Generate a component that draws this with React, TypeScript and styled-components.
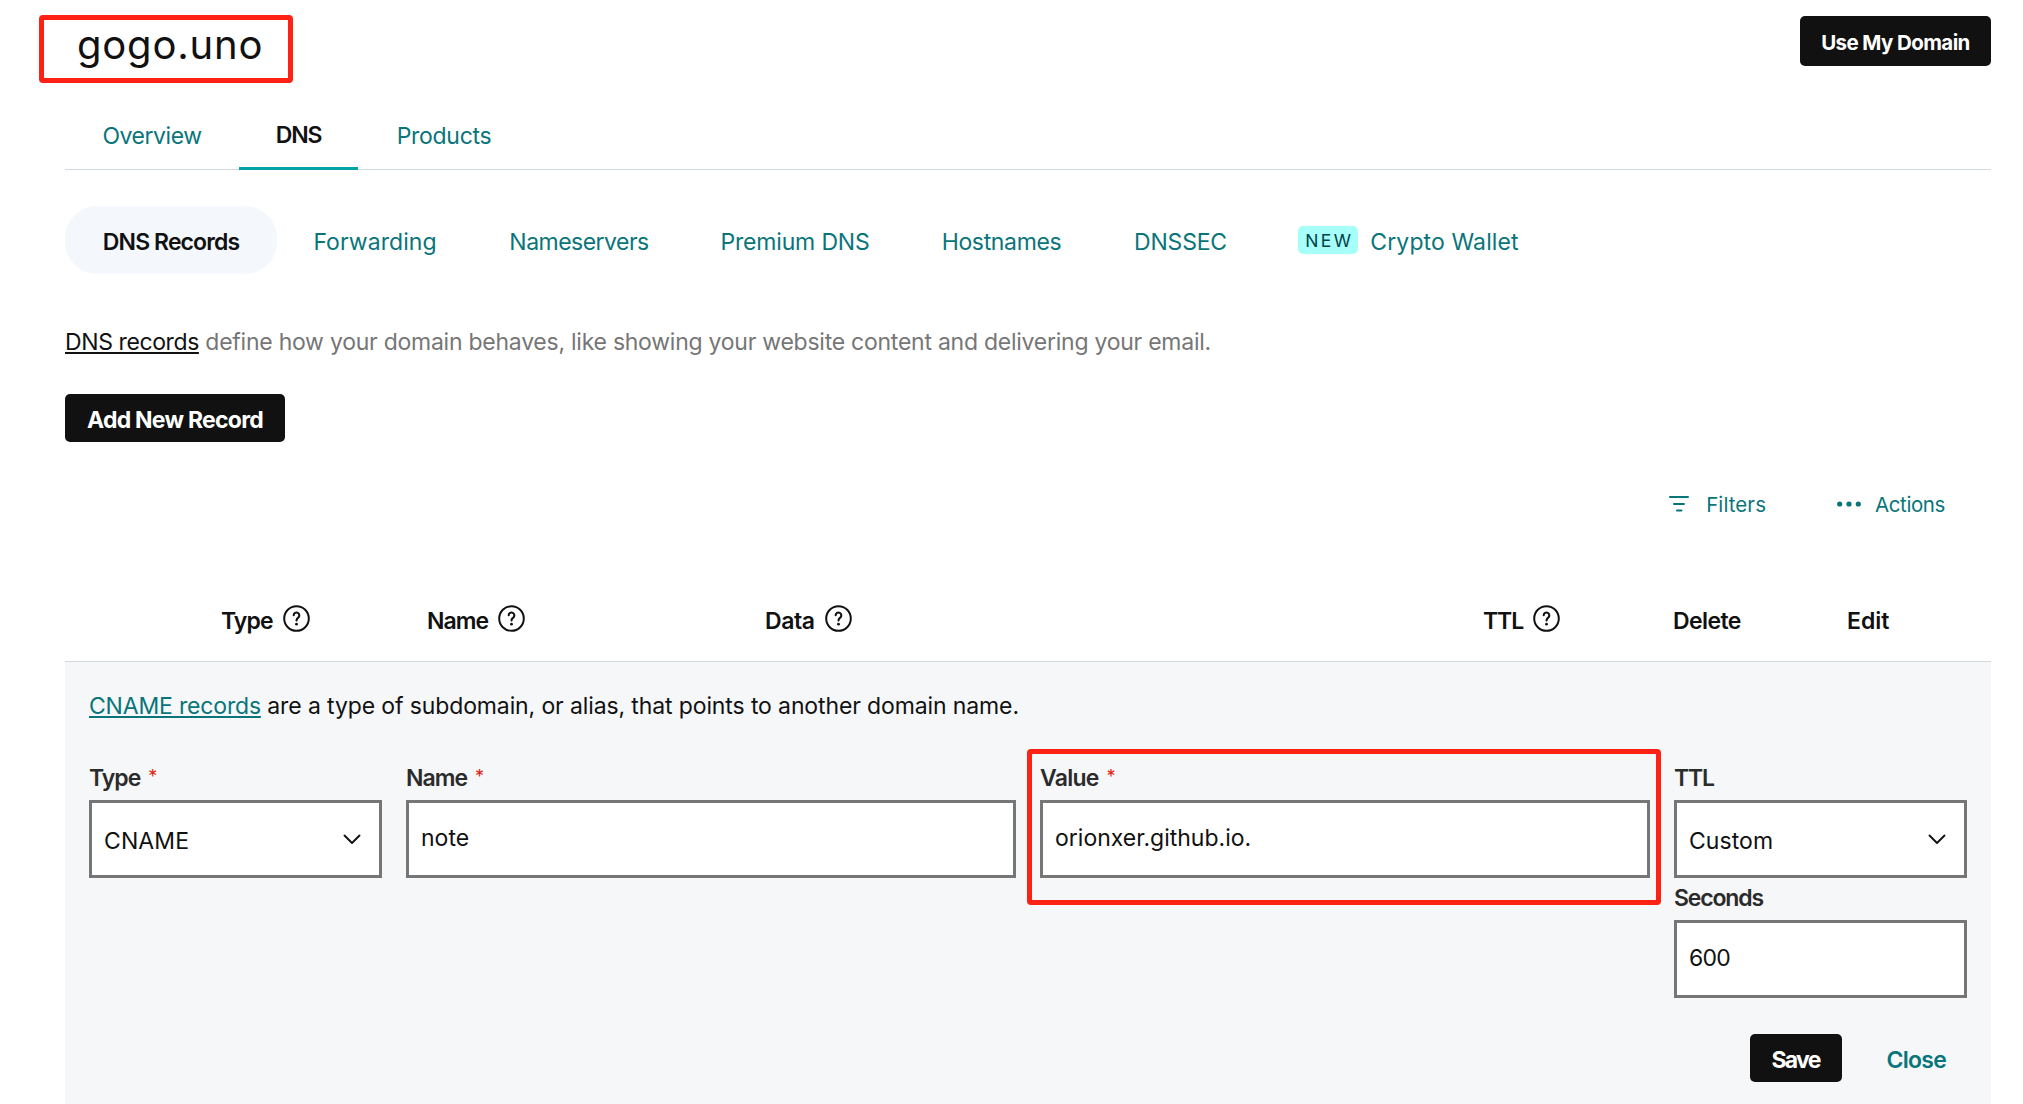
import React from 'react';
import styled, { createGlobalStyle, css } from 'styled-components';

const teal = '#09757a';
const ink = '#111111';

const GlobalStyle = createGlobalStyle`
  *, *::before, *::after { box-sizing: border-box; }
  body {
    margin: 0;
    background: #ffffff;
    color: ${ink};
    font-family: Inter, 'Liberation Sans', sans-serif;
    font-size: 23px;
  }
`;

const Page = styled.main`
  width: 2023px;
  height: 1104px;
  padding: 0 32px 0 65px;
  overflow: hidden;
  display: flex;
  flex-direction: column;
`;

const Text = styled.span<{ $track?: number }>`
  letter-spacing: ${({ $track = 0 }) => $track}px;
  white-space: nowrap;
`;

const Header = styled.header`
  height: 103px;
  padding-top: 16px;
  display: flex;
  justify-content: space-between;
  align-items: flex-start;
  flex: none;
`;

const TitleWrap = styled.div`
  position: relative;
  width: 198px;
  padding: 5px 0 0 12px;
`;

const Title = styled.h1`
  margin: 0;
  font-size: 40px;
  font-weight: 400;
  line-height: 48px;
  letter-spacing: 0.8px;
`;

const Highlight = styled.div<{ $inset: string }>`
  position: absolute;
  inset: ${({ $inset }) => $inset};
  border: 5px solid #ff2113;
  border-radius: 4px;
  pointer-events: none;
`;

const Button = styled.button<{ $w: number; $h?: number; $size?: number }>`
  width: ${({ $w }) => $w}px;
  height: ${({ $h = 48 }) => $h}px;
  padding: 3px 0 0;
  border: 0;
  border-radius: 5px;
  background: ${ink};
  color: #ffffff;
  font-family: inherit;
  font-size: ${({ $size = 23 }) => $size}px;
  font-weight: 700;
  display: flex;
  align-items: center;
  justify-content: center;
  flex: none;
`;

const Tabs = styled.nav`
  height: 67px;
  border-bottom: 1px solid #d4dbe0;
  display: flex;
  flex: none;
`;

const Tab = styled.a<{ $w: number; $active?: boolean }>`
  width: ${({ $w }) => $w}px;
  height: 67px;
  display: flex;
  align-items: center;
  justify-content: center;
  color: ${teal};
  padding-top: 2px;
  border-bottom: 3px solid transparent;
  ${({ $active }) =>
    $active &&
    css`
      color: ${ink};
      font-weight: 600;
      padding-top: 0;
      border-bottom-color: #00a4a6;
    `}
`;

const SubNav = styled.nav`
  display: flex;
  margin-top: 36px;
  height: 68px;
  flex: none;
`;

const Pill = styled.a<{ $w: number; $active?: boolean }>`
  width: ${({ $w }) => $w}px;
  padding-top: 3px;
  display: flex;
  align-items: center;
  justify-content: center;
  border-radius: 32px;
  color: ${({ $active }) => ($active ? ink : teal)};
  background: ${({ $active }) => ($active ? '#f4f8fc' : 'transparent')};
  font-weight: ${({ $active }) => ($active ? 600 : 400)};
`;

const Badge = styled.span`
  width: 60px;
  height: 28px;
  margin: 0 12px 3px 0;
  padding-left: 2px;
  border-radius: 5px;
  background: #a6fff8;
  color: #004249;
  font-size: 17.5px;
  display: flex;
  align-items: center;
  justify-content: center;
`;

const Description = styled.p`
  margin: 50px 0 34px;
  line-height: 36px;
  color: #767676;
  flex: none;
`;

const Link = styled.a<{ $color: string; $track: number }>`
  color: ${({ $color }) => $color};
  letter-spacing: ${({ $track }) => $track}px;
  text-decoration: underline;
  text-decoration-thickness: 2px;
  text-underline-offset: 2px;
  text-decoration-skip-ink: none;
`;

const Toolbar = styled.div`
  height: 32px;
  margin-top: 46px;
  padding-right: 46px;
  display: flex;
  justify-content: flex-end;
  gap: 71px;
  color: ${teal};
  font-size: 20.5px;
  flex: none;
`;

const Action = styled.a<{ $gap: number; $drop?: number }>`
  display: flex;
  align-items: center;
  gap: ${({ $gap }) => $gap}px;
  svg { margin-bottom: 1px; }
  ${Text} { padding-top: ${({ $drop = 0 }) => $drop}px; }
`;

const TableHead = styled.div`
  height: 83px;
  margin-top: 59px;
  padding-left: 156px;
  display: grid;
  grid-template-columns: 206px 338px 718px 190px 174px 1fr;
  align-items: center;
  border-bottom: 1px solid #d4dbe0;
  font-weight: 600;
  flex: none;
`;

const HeadCell = styled.div`
  display: flex;
  align-items: center;
  gap: 10px;
  padding-top: 1px;
  svg { margin-bottom: 4px; }
`;

const Panel = styled.section`
  flex: 1;
  padding: 26px 24px 0;
  background: #f5f7f9;
`;

const Info = styled.p`
  margin: 0 0 36px;
  line-height: 36px;
`;

const Form = styled.div`
  display: grid;
  grid-template-columns: 293px 610px 610px 293px;
  column-gap: 24px;
`;

const Column = styled.div`
  position: relative;
  display: flex;
  flex-direction: column;
  gap: 2px;
`;

const Label = styled.label`
  display: flex;
  height: 40px;
  line-height: 36px;
  font-weight: 600;
  color: #2b2b2b;
`;

const Star = styled.span`
  margin-left: 8px;
  margin-top: -1px;
  color: #e01e10;
  font-size: 18px;
  font-weight: 400;
`;

const Control = styled.div<{ $select?: boolean }>`
  height: 78px;
  border: 3px solid #767676;
  background: #ffffff;
  padding: ${({ $select }) => ($select ? '3px 18px 0 12px' : '0 12px 3px')};
  display: flex;
  align-items: center;
  justify-content: space-between;
  svg { margin-bottom: 3px; }
`;

const Footer = styled.div`
  margin-top: 36px;
  padding-right: 21px;
  display: flex;
  justify-content: flex-end;
  gap: 45px;
`;

const CloseLink = styled.a`
  padding-top: 3px;
  display: flex;
  align-items: center;
  color: ${teal};
  font-weight: 600;
`;

const HelpIcon = () => (
  <svg width="27" height="27" viewBox="0 0 27 27" fill="none" stroke={ink} strokeWidth="2" strokeLinecap="round">
    <circle cx="13.5" cy="13.5" r="12.3" />
    <path d="M10.7 10.3a2.8 2.8 0 1 1 4.5 2.3c-1.1.8-1.7 1.3-1.7 2.8" strokeWidth="2.1" />
    <circle cx="13.5" cy="19.2" r="1.4" fill={ink} stroke="none" />
  </svg>
);

const FilterIcon = () => (
  <svg width="20" height="18" viewBox="0 0 20 18" stroke={teal} strokeWidth="2" strokeLinecap="round">
    <path d="M1 2h18M5 9h10M8 15.5h4.5" />
  </svg>
);

const DotsIcon = () => (
  <svg width="24" height="6" viewBox="0 0 24 6" fill={teal}>
    <circle cx="2.7" cy="3" r="2.6" />
    <circle cx="12" cy="3" r="2.6" />
    <circle cx="21.3" cy="3" r="2.6" />
  </svg>
);

const Chevron = () => (
  <svg width="18" height="11" viewBox="0 0 18 11" fill="none" stroke={ink} strokeWidth="1.9" strokeLinecap="round" strokeLinejoin="round">
    <path d="M1.5 1.5 9 9l7.5-7.5" />
  </svg>
);

const tabs = [
  { label: 'Overview', w: 174, track: -0.45 },
  { label: 'DNS', w: 119, track: -1.1, active: true },
  { label: 'Products', w: 172, track: -0.3 },
];

const pills = [
  { label: 'DNS Records', w: 212, track: -0.9, active: true },
  { label: 'Forwarding', w: 196, track: 0.05 },
  { label: 'Nameservers', w: 212, track: -0.52 },
  { label: 'Premium DNS', w: 220, track: -0.16 },
  { label: 'Hostnames', w: 193, track: -0.35 },
  { label: 'DNSSEC', w: 165, track: -0.2 },
  { label: 'Crypto Wallet', w: 291, track: 0.12, badge: true },
];

const columns = [
  { label: 'Type', track: -0.9, help: true },
  { label: 'Name', track: -1, help: true },
  { label: 'Data', track: -0.4, help: true },
  { label: 'TTL', track: -1.1, help: true },
  { label: 'Delete', track: -0.6 },
  { label: 'Edit', track: 0 },
];

type FieldProps = {
  label: string;
  labelTrack: number;
  value: string;
  valueTrack: number;
  required?: boolean;
  select?: boolean;
};

const Field = ({ label, labelTrack, value, valueTrack, required, select }: FieldProps) => (
  <div>
    <Label>
      <Text $track={labelTrack}>{label}</Text>
      {required && <Star>*</Star>}
    </Label>
    <Control $select={select}>
      <Text $track={valueTrack}>{value}</Text>
      {select && <Chevron />}
    </Control>
  </div>
);

export default function App() {
  return (
    <Page>
      <GlobalStyle />
      <Header>
        <TitleWrap>
          <Title>gogo.uno</Title>
          <Highlight $inset="-1px -30px -14px -26px" />
        </TitleWrap>
        <Button $w={191} $h={50} $size={20.5}>
          <Text $track={-0.6}>Use My Domain</Text>
        </Button>
      </Header>

      <Tabs>
        {tabs.map((t) => (
          <Tab key={t.label} $w={t.w} $active={t.active}>
            <Text $track={t.track}>{t.label}</Text>
          </Tab>
        ))}
      </Tabs>

      <SubNav>
        {pills.map((p) => (
          <Pill key={p.label} $w={p.w} $active={p.active}>
            {p.badge && (
              <Badge>
                <Text $track={2.3}>NEW</Text>
              </Badge>
            )}
            <Text $track={p.track}>{p.label}</Text>
          </Pill>
        ))}
      </SubNav>

      <Description>
        <Link $color={ink} $track={-0.4}>DNS records</Link>{' '}
        <Text $track={-0.25}>
          define how your domain behaves, like showing your website content and delivering your email.
        </Text>
      </Description>

      <Button $w={220}>
        <Text $track={-0.75}>Add New Record</Text>
      </Button>

      <Toolbar>
        <Action $gap={17}>
          <FilterIcon />
          <Text $track={0.08}>Filters</Text>
        </Action>
        <Action $gap={14} $drop={1}>
          <DotsIcon />
          <Text $track={-0.4}>Actions</Text>
        </Action>
      </Toolbar>

      <TableHead>
        {columns.map((c) => (
          <HeadCell key={c.label}>
            <Text $track={c.track}>{c.label}</Text>
            {c.help && <HelpIcon />}
          </HeadCell>
        ))}
      </TableHead>

      <Panel>
        <Info>
          <Link $color={teal} $track={-0.18}>CNAME records</Link>{' '}
          <Text $track={-0.12}>are a type of subdomain, or alias, that points to another domain name.</Text>
        </Info>
        <Form>
          <Column>
            <Field label="Type" labelTrack={-1} value="CNAME" valueTrack={0.1} required select />
          </Column>
          <Column>
            <Field label="Name" labelTrack={-1} value="note" valueTrack={0} required />
          </Column>
          <Column>
            <Field label="Value" labelTrack={-0.75} value="orionxer.github.io." valueTrack={0} required />
            <Highlight $inset="-11px -11px 93px -13px" />
          </Column>
          <Column>
            <Field label="TTL" labelTrack={-1.2} value="Custom" valueTrack={0.05} select />
            <Field label="Seconds" labelTrack={-1.15} value="600" valueTrack={-0.7} />
          </Column>
        </Form>
        <Footer>
          <Button $w={92}>
            <Text $track={-1.7}>Save</Text>
          </Button>
          <CloseLink>
            <Text $track={-0.75}>Close</Text>
          </CloseLink>
        </Footer>
      </Panel>
    </Page>
  );
}
